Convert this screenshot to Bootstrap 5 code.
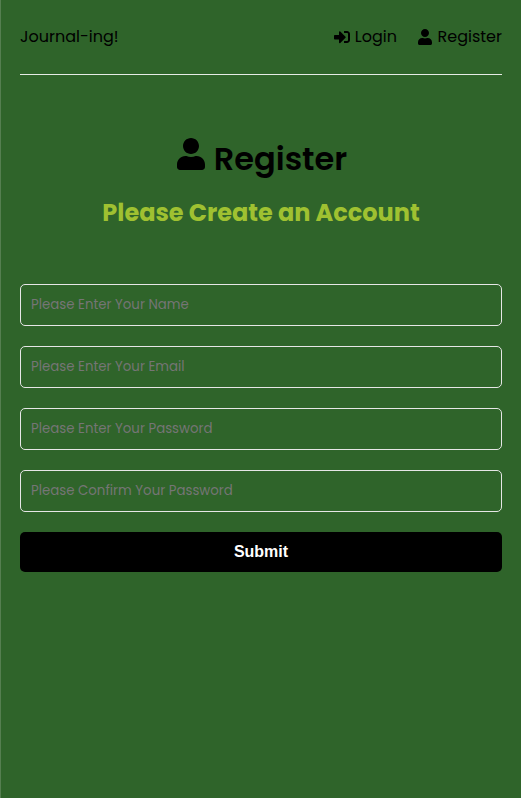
<!DOCTYPE html>
<html lang="en">
<head>
<meta charset="utf-8">
<meta name="viewport" content="width=device-width, initial-scale=1">
<title>Journal-ing!</title>
<link href="https://cdn.jsdelivr.net/npm/bootstrap@5.3.0/dist/css/bootstrap.min.css" rel="stylesheet">
<style>
body{background:#2f642a;color:#000;font-family:Poppins,Inter,sans-serif;font-size:16px;min-height:100vh;border-left:1px solid #557f50;padding:0 19px}
.topbar{height:75px;border-bottom:1px solid #e6ebe5!important}
.topbar nav{gap:21px}
.topbar a{color:#000;line-height:24px}
.topbar svg{width:16px;height:16px;margin-right:5px}
.topbar svg.person{width:14px;margin-right:5.6px}
.heading{padding-top:60px}
.heading h1{font-size:32px;font-weight:600;line-height:48px;height:48px;padding-left:2px}
.heading h1 svg{width:28px;height:32px;margin:-10px 9px 0 0}
.heading h2{font-size:24px;font-weight:700;line-height:36px;color:#9fc131;margin:12px 0 0}
.fields{margin-top:53px;gap:20px}
.fields .form-control{height:42px;padding:0 10px 1px;border:1px solid #e6e6e6;border-radius:5px;background:transparent;color:#000;font-size:13.3333px}
.fields .form-control::placeholder{color:#757575;opacity:1}
.fields .btn{height:40px;padding:0;border:0;border-radius:5px;background:#000;color:#fff;font:bold 16px "Liberation Sans",Arial,sans-serif}
</style>
</head>
<body>
<header class="topbar d-flex justify-content-between align-items-center">
<a class="text-decoration-none" href="#">Journal-ing!</a>
<nav class="d-flex">
<a class="text-decoration-none d-flex align-items-center" href="#"><svg viewBox="0 0 512 512" fill="currentColor"><path d="M416 448h-84c-6.600 0-12-5.400-12-12v-40c0-6.600 5.400-12 12-12h84c17.700 0 32-14.300 32-32V160c0-17.700-14.300-32-32-32h-84c-6.600 0-12-5.400-12-12V76c0-6.600 5.400-12 12-12h84c53 0 96 43 96 96v192c0 53-43 96-96 96zm-47-201L201 79c-15-15-41-4.500-41 17v96H24c-13.300 0-24 10.700-24 24v96c0 13.300 10.700 24 24 24h136v96c0 21.500 26 32 41 17l168-168c9.300-9.400 9.300-24.600 0-34z"/></svg><span>Login</span></a>
<a class="text-decoration-none d-flex align-items-center" href="#"><svg class="person" viewBox="0 0 448 512" fill="currentColor"><path d="M224 256c70.700 0 128-57.300 128-128S294.700 0 224 0 96 57.300 96 128s57.300 128 128 128zm89.600 32h-16.700c-22.200 10.200-46.900 16-72.900 16s-50.600-5.800-72.900-16h-16.700C60.200 288 0 348.200 0 422.400V464c0 26.500 21.500 48 48 48h352c26.500 0 48-21.500 48-48v-41.600c0-74.200-60.200-134.400-134.400-134.400z"/></svg><span>Register</span></a>
</nav>
</header>
<main>
<section class="heading text-center">
<h1 class="d-flex justify-content-center align-items-center mb-0"><svg viewBox="0 0 448 512" fill="currentColor"><path d="M224 256c70.700 0 128-57.300 128-128S294.700 0 224 0 96 57.300 96 128s57.300 128 128 128zm89.600 32h-16.700c-22.200 10.200-46.900 16-72.900 16s-50.600-5.800-72.900-16h-16.700C60.200 288 0 348.200 0 422.400V464c0 26.500 21.500 48 48 48h352c26.500 0 48-21.500 48-48v-41.600c0-74.200-60.200-134.400-134.400-134.400z"/></svg><span>Register</span></h1>
<h2>Please Create an Account</h2>
</section>
<form class="fields d-flex flex-column">
<input class="form-control" type="text" placeholder="Please Enter Your Name">
<input class="form-control" type="email" placeholder="Please Enter Your Email">
<input class="form-control" type="password" placeholder="Please Enter Your Password">
<input class="form-control" type="password" placeholder="Please Confirm Your Password">
<button class="btn w-100" type="button">Submit</button>
</form>
</main>
<script src="https://cdn.jsdelivr.net/npm/bootstrap@5.3.0/dist/js/bootstrap.bundle.min.js"></script>
</body>
</html>
